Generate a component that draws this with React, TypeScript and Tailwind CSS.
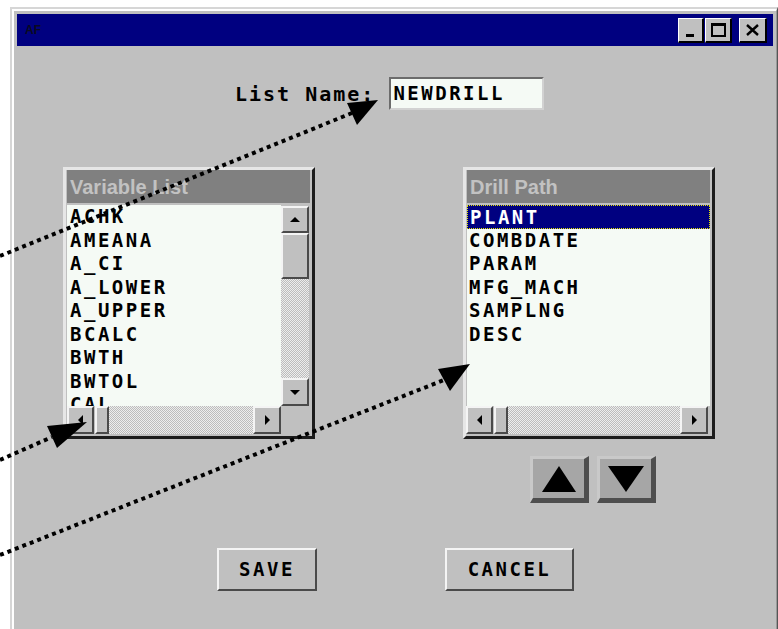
import React from 'react'

const mono = "font-['DejaVu_Sans_Mono',monospace] font-bold"

const variables = ['ACHK', 'AMEANA', 'A_CI', 'A_LOWER', 'A_UPPER', 'BCALC', 'BWTH', 'BWTOL', 'CAL']
const drillPath = ['PLANT', 'COMBDATE', 'PARAM', 'MFG_MACH', 'SAMPLNG', 'DESC']

const raised = 'bg-[#c0c0c0] border-t-2 border-l-2 border-t-[#f4f4f4] border-l-[#f4f4f4] border-r-2 border-b-2 border-r-[#4a4a4a] border-b-[#4a4a4a]'
const track = 'bg-[image:repeating-conic-gradient(#bcbcbc_0_25%,#ededed_0_50%)] bg-[length:2px_2px]'

const Tri = ({ dir }: { dir: 'up' | 'down' | 'left' | 'right' }) => {
    const pts = {
        up: '0,5 10,5 5,0',
        down: '0,0 10,0 5,5',
        left: '5,0 5,10 0,5',
        right: '0,0 0,10 5,5',
    }[dir]
    const vertical = dir === 'up' || dir === 'down'
    return (
        <svg width={vertical ? 10 : 5} height={vertical ? 5 : 10} viewBox={vertical ? '0 0 10 5' : '0 0 5 10'}>
            <polygon points={pts} fill="#000" />
        </svg>
    )
}

const ScrollBtn = ({ dir, className = '' }: { dir: 'up' | 'down' | 'left' | 'right'; className?: string }) => (
    <div className={`${raised} flex items-center justify-center shrink-0 ${className}`}>
        <Tri dir={dir} />
    </div>
)

const HScroll = ({ className = '' }: { className?: string }) => (
    <div className={`flex h-[28px] ${className}`}>
        <ScrollBtn dir="left" className="w-[27px] h-[28px]" />
        <div className={`${raised} w-[14px] h-[28px] ml-px shrink-0`} />
        <div className={`flex-1 ${track}`} />
        <ScrollBtn dir="right" className="w-[28px] h-[28px]" />
    </div>
)

const ListBox = ({ title, children }: { title: string; children: React.ReactNode }) => (
    <div className="w-[252px] h-[272px] bg-[#c0c0c0] border-t-[3px] border-l-[3px] border-t-[#e6e6e6] border-l-[#e6e6e6] border-r-[3px] border-b-[3px] border-r-[#1c1c1c] border-b-[#1c1c1c] flex flex-col">
        <div className="ml-px mr-[2px] h-[33px] bg-[#808080] flex items-center pl-[3px] font-['Liberation_Sans',Arial,sans-serif] font-bold text-[20px] text-[#c2c2c2]">
            {title}
        </div>
        <div className="mt-[2px] ml-px mr-[2px]">{children}</div>
    </div>
)

const Row = ({ label, selected = false, pad = 'pl-[3px]' }: { label: string; selected?: boolean; pad?: string }) => (
    <div
        className={`h-[23.5px] leading-[23.5px] ${pad} ${mono} text-[19px] tracking-[2.5px] whitespace-nowrap ${
            selected ? 'bg-[#000080] text-white border border-dotted border-[#e6e600] leading-[21.5px]' : 'text-black'
        }`}
    >
        {label}
    </div>
)

const TitleButton = ({ children, className = '' }: { children: React.ReactNode; className?: string }) => (
    <div className={`w-[26px] h-[25px] bg-[#c0c0c0] border-t border-l border-white border-r-2 border-b-2 border-r-black border-b-black flex items-center justify-center ${className}`}>
        {children}
    </div>
)

const Arrows = () => (
    <svg className="absolute inset-0 pointer-events-none" width="778" height="629" viewBox="0 0 778 629">
        <g stroke="#000" strokeWidth="4" strokeDasharray="4 4" fill="none">
            <line x1="0" y1="256" x2="352" y2="113" />
            <line x1="0" y1="460" x2="52" y2="437" />
            <line x1="0" y1="555" x2="444" y2="380" />
        </g>
        <g fill="#000">
            <polygon points="378,100 347,103 357,125" />
            <polygon points="87,422 47,426 57,448" />
            <polygon points="470,364 438,369 450,391" />
        </g>
    </svg>
)

const App = () => {
    return (
        <div className="relative w-[778px] h-[629px] bg-white overflow-hidden pl-[10px] pt-[7px]">
            <div className="w-[768px] h-[640px] border-t-2 border-l-2 border-[#d6d6d6] border-r border-r-[#555]">
                <div className="h-full bg-[#c0c0c0] border-t-2 border-l-2 border-white border-r border-r-[#999] p-[3px]">
                    {/* title bar */}
                    <div className="h-[32px] w-[756px] bg-[#000080] flex items-center pl-[8px] pr-[6px]">
                        <span className="font-['Liberation_Sans',Arial,sans-serif] font-bold text-[12px] text-[#0a0a20]">AF</span>
                        <div className="ml-auto flex items-center">
                            <TitleButton>
                                <div className="w-[8px] h-[3px] bg-black mt-[12px] -ml-[2px]" />
                            </TitleButton>
                            <TitleButton className="ml-px w-[27px]">
                                <div className="w-[15px] h-[14px] border-2 border-t-[3px] border-black" />
                            </TitleButton>
                            <TitleButton className="ml-[7px] w-[28px]">
                                <svg width="13" height="12" viewBox="0 0 13 12">
                                    <path d="M1 1 L12 11 M12 1 L1 11" stroke="#000" strokeWidth="2.4" />
                                </svg>
                            </TitleButton>
                        </div>
                    </div>

                    {/* list name */}
                    <div className="mt-[31px] ml-[218px] flex items-center">
                        <span className={`${mono} text-[20px] tracking-[2px] leading-none text-black`}>List Name:</span>
                        <div className="ml-[14px] w-[155px] h-[33px] bg-[#f5faf5] border-t-2 border-l-2 border-t-[#6c6c6c] border-l-[#6c6c6c] border-r-2 border-b-2 border-r-[#d2d2d2] border-b-[#d2d2d2] flex items-center pl-[2px]">
                            <span className={`${mono} text-[19px] tracking-[2.5px] text-black`}>NEWDRILL</span>
                        </div>
                    </div>

                    {/* lists */}
                    <div className="mt-[57px] ml-[46px] flex gap-[148px]">
                        <ListBox title="Variable List">
                            <div className="flex">
                                <div className="w-[214px]">
                                    <div className="h-[201px] bg-[#f5faf5] overflow-hidden">
                                        {variables.map(v => (
                                            <Row key={v} label={v} />
                                        ))}
                                    </div>
                                    <HScroll />
                                </div>
                                <div className="w-[28px] flex flex-col">
                                    <div className="h-[201px] flex flex-col">
                                        <ScrollBtn dir="up" className="w-[28px] h-[27px] mt-px" />
                                        <div className={`${raised} w-[28px] h-[46px] shrink-0`} />
                                        <div className={`flex-1 ${track}`} />
                                        <ScrollBtn dir="down" className="w-[28px] h-[28px]" />
                                    </div>
                                    <div className="h-[28px] bg-[#c0c0c0]" />
                                </div>
                            </div>
                        </ListBox>

                        <ListBox title="Drill Path">
                            <div className="h-[201px] bg-[#f5faf5] overflow-hidden">
                                {drillPath.map((d, i) => (
                                    <Row key={d} label={d} selected={i === 0} pad="pl-[2px]" />
                                ))}
                            </div>
                            <HScroll className="-ml-px mr-[2px]" />
                        </ListBox>
                    </div>

                    {/* reorder buttons */}
                    <div className="mt-[17px] ml-[513px] flex gap-[8px]">
                        <div className="w-[59px] h-[47px] bg-[#a6a6a6] border-t-[3px] border-l-[3px] border-t-[#c9c9c9] border-l-[#c9c9c9] border-r-[5px] border-b-[5px] border-r-[#4e4e4e] border-b-[#4e4e4e] flex items-center justify-center">
                            <svg width="34" height="26" viewBox="0 0 34 26">
                                <polygon points="0,26 34,26 17,0" fill="#000" />
                            </svg>
                        </div>
                        <div className="w-[59px] h-[47px] bg-[#a6a6a6] border-t-[3px] border-l-[3px] border-t-[#c9c9c9] border-l-[#c9c9c9] border-r-[5px] border-b-[5px] border-r-[#4e4e4e] border-b-[#4e4e4e] flex items-center justify-center">
                            <svg width="36" height="26" viewBox="0 0 36 26">
                                <polygon points="0,0 36,0 18,26" fill="#000" />
                            </svg>
                        </div>
                    </div>

                    {/* actions */}
                    <div className="mt-[45px] ml-[200px] flex gap-[128px]">
                        <div className={`w-[100px] h-[43px] ${raised} flex items-center justify-center`}>
                            <span className={`${mono} text-[19px] tracking-[2.5px] text-black`}>SAVE</span>
                        </div>
                        <div className={`w-[129px] h-[43px] ${raised} flex items-center justify-center`}>
                            <span className={`${mono} text-[19px] tracking-[2.5px] text-black`}>CANCEL</span>
                        </div>
                    </div>
                </div>
            </div>
            <Arrows />
        </div>
    )
}

export default App
